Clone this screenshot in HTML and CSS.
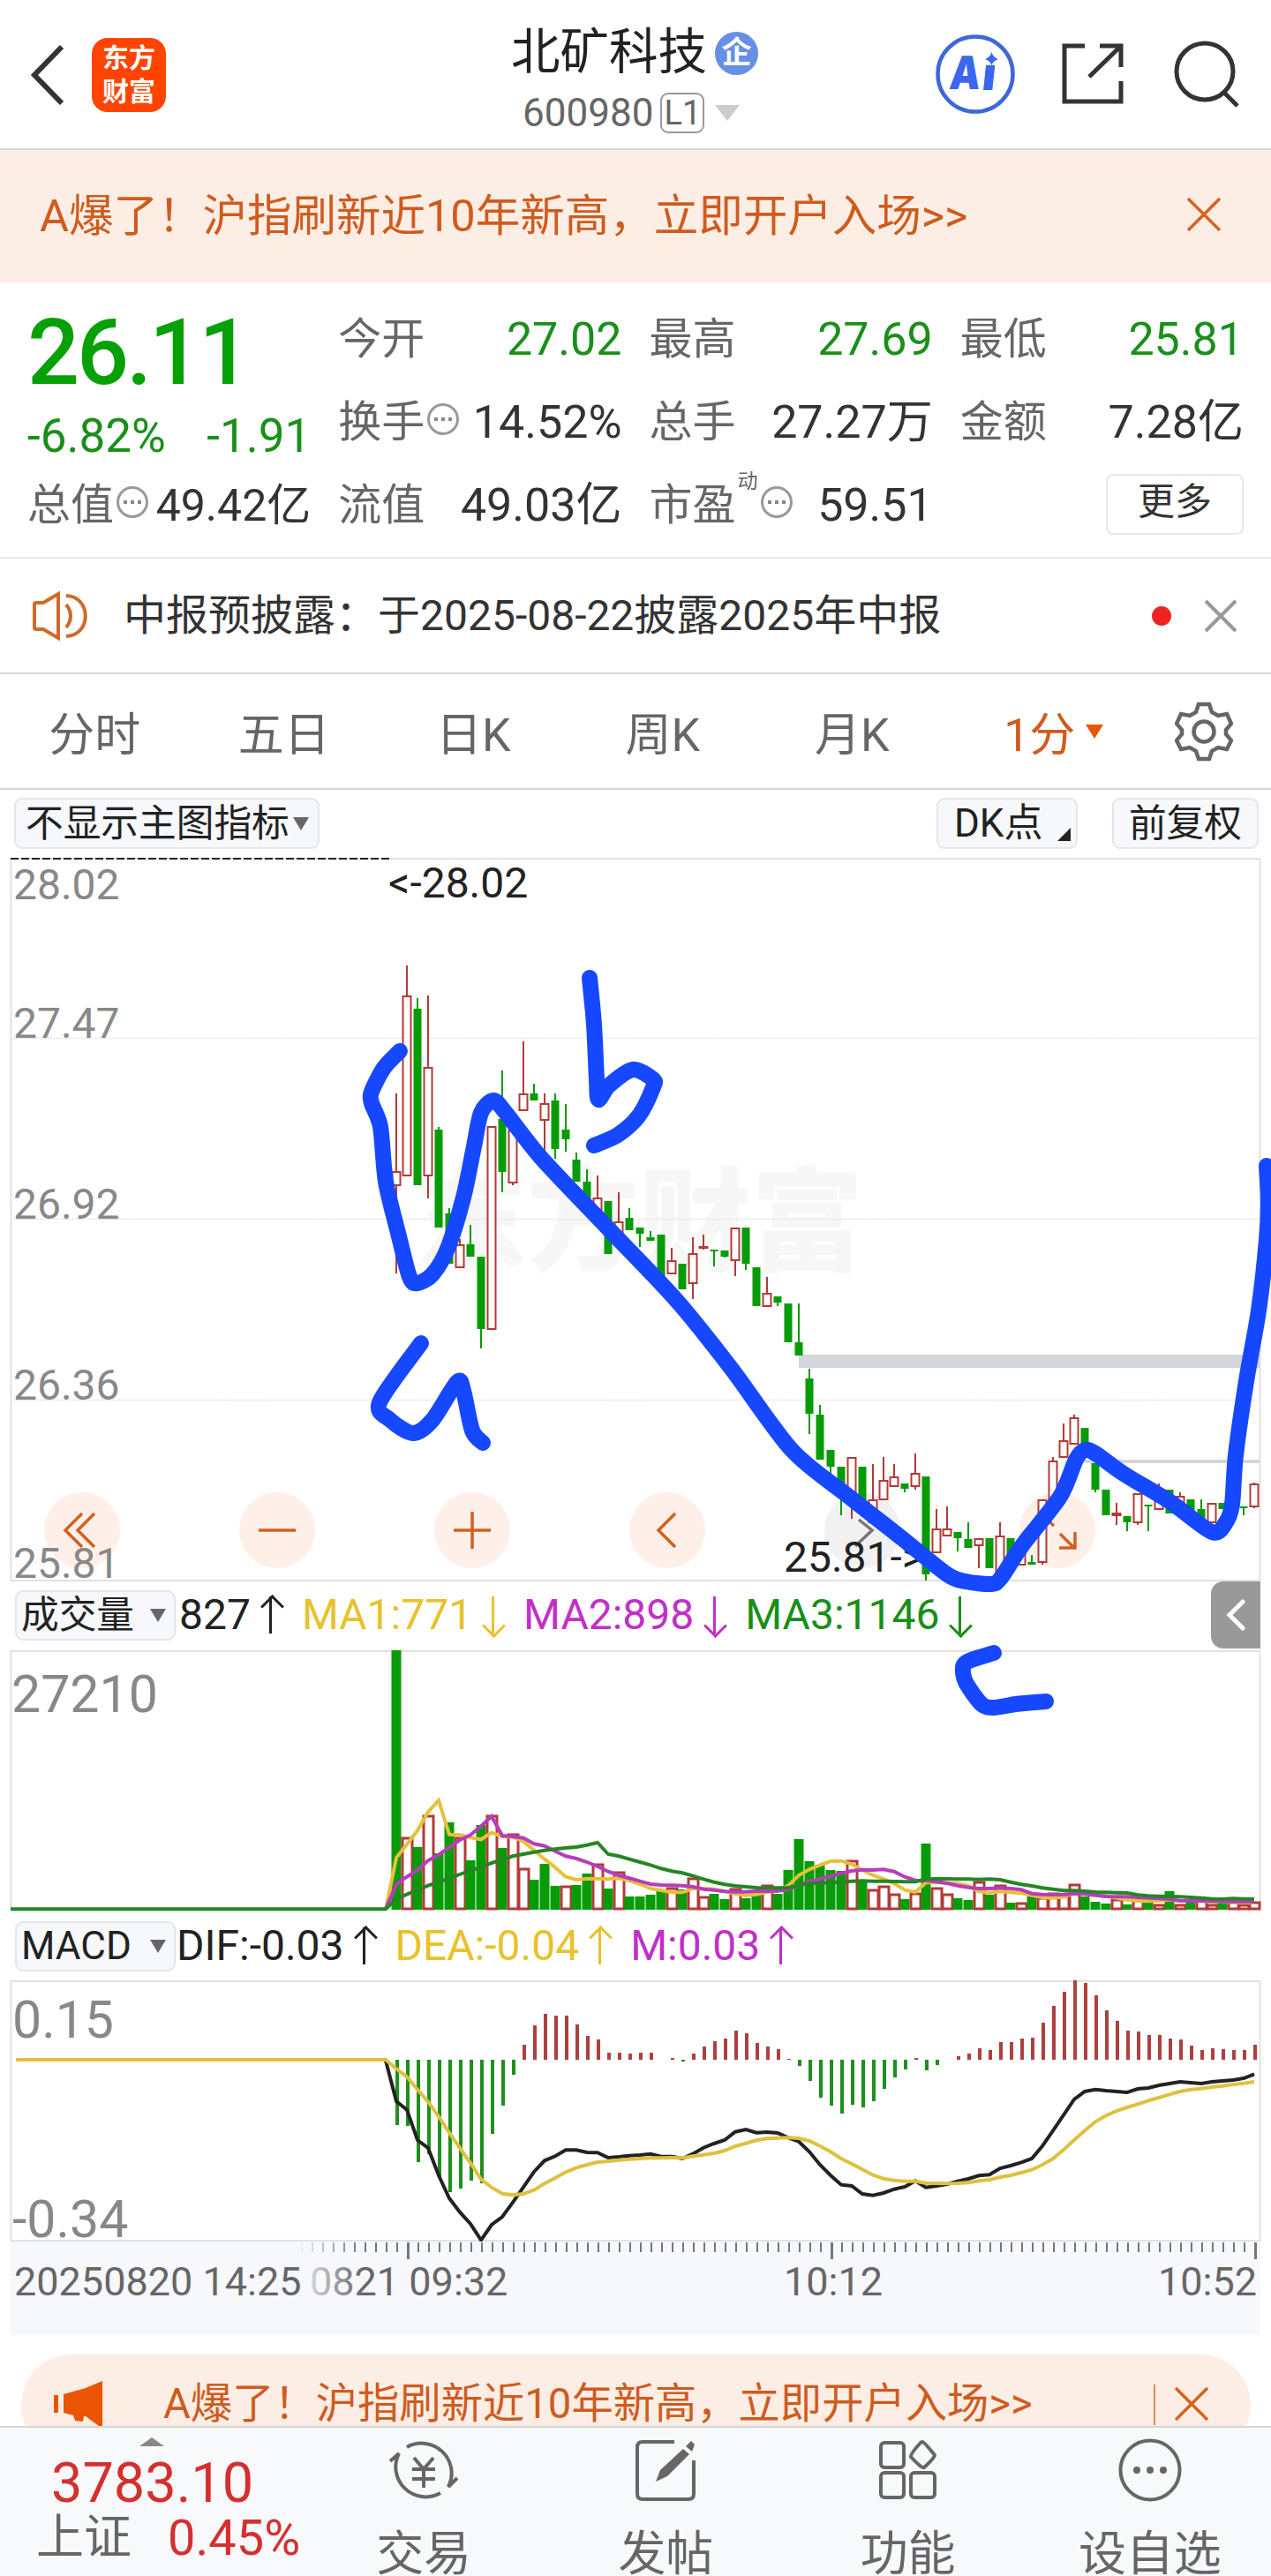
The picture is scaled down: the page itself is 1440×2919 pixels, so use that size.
FILE: index.html
```
<!DOCTYPE html>
<html lang="zh-CN">
<head>
    <meta charset="UTF-8">
    <meta name="viewport" content="width=device-width, initial-scale=1.0">
    <title>北矿科技 600980</title>
    <link rel="stylesheet" href="styles.css">
</head>
<body>
    <div class="page">
        <!-- 顶部导航 -->
        <header class="header">
            <div class="header-left">
                <svg class="icon-back" width="44" height="76" viewBox="0 0 44 76"><path d="M38 6L7 38L38 70"/></svg>
                <div class="logo"><span>东方</span><span>财富</span></div>
            </div>
            <div class="header-title">
                <div class="stock-name">北矿科技<span class="badge">企</span></div>
                <div class="stock-code">600980<span class="level">L1</span><i class="tri-down light"></i></div>
            </div>
            <div class="header-right">
                <svg width="90" height="90" viewBox="0 0 90 90">
                    <circle cx="45" cy="45" r="42.5" fill="none" stroke="#3f67d8" stroke-width="4.500"/>
                    <g class="ai-text" transform="skewX(-6) translate(6 0)">
                        <text x="15" y="62" textLength="35" lengthAdjust="spacingAndGlyphs">A</text>
                        <text x="52" y="63">ı</text>
                    </g>
                    <path d="M63.500 20Q65 26 71 28Q65 30 63.500 35Q62 30 56 28Q62 26 63.500 20Z" fill="#3a66f0"/>
                </svg>
                <svg class="line-icon" width="76" height="76" viewBox="0 0 76 76">
                    <path d="M29 6H6V69H70V46M46 6H70V30M69 7L34 41"/>
                </svg>
                <svg class="line-icon" width="80" height="80" viewBox="0 0 80 80">
                    <circle cx="39" cy="37" r="32"/><path d="M61 61L76 76"/>
                </svg>
            </div>
        </header>

        <!-- 开户广告 -->
        <div class="top-banner">
            <span>A爆了！沪指刷新近10年新高，立即开户入场&gt;&gt;</span>
            <svg width="40" height="40" viewBox="0 0 40 40"><path d="M2 2L38 38M38 2L2 38"/></svg>
        </div>

        <!-- 行情数据 -->
        <section class="quote">
            <div class="quote-col">
                <div class="price">26.11</div>
                <div class="change"><span>-6.82%</span><span>-1.91</span></div>
                <div class="cell total"><label>总值</label><i class="more-dot"></i><b>49.42亿</b></div>
            </div>
            <div class="quote-col">
                <div class="cell"><label>今开</label><b class="down">27.02</b></div>
                <div class="cell"><label>换手</label><i class="more-dot"></i><b>14.52%</b></div>
                <div class="cell"><label>流值</label><b>49.03亿</b></div>
            </div>
            <div class="quote-col">
                <div class="cell"><label>最高</label><b class="down">27.69</b></div>
                <div class="cell"><label>总手</label><b>27.27万</b></div>
                <div class="cell"><label>市盈<sup>动</sup></label><i class="more-dot pe"></i><b>59.51</b></div>
            </div>
            <div class="quote-col">
                <div class="cell"><label>最低</label><b class="down">25.81</b></div>
                <div class="cell"><label>金额</label><b>7.28亿</b></div>
                <div class="cell"><button class="more-button">更多</button></div>
            </div>
        </section>

        <!-- 公告 -->
        <div class="notice">
            <svg class="icon-speaker" width="66" height="56" viewBox="0 0 66 56">
                <path d="M3 15Q3 13 5 13H13L30 3V53L13 43H5Q3 43 3 41ZM39 15Q49 28 39 41M39 5C68 6 68 50 39 51"/>
            </svg>
            <span class="notice-text">中报预披露：于2025-08-22披露2025年中报</span>
            <i class="red-dot"></i>
            <svg class="icon-close" width="38" height="38" viewBox="0 0 38 38"><path d="M2 2L36 36M36 2L2 36"/></svg>
        </div>

        <!-- 周期切换 -->
        <nav class="tabs">
            <span>分时</span>
            <span>五日</span>
            <span>日K</span>
            <span>周K</span>
            <span>月K</span>
            <span class="active">1分<i class="tri-down orange"></i></span>
            <div class="gear">
                <svg width="66" height="68" viewBox="0 0 66 68">
                    <path d="M27 3H39L42 12L49 16L59 14L64 25L58 32V37L64 44L59 54L49 52L42 56L39 65H27L24 56L17 52L7 54L2 44L8 37V32L2 25L7 14L17 16L24 12Z"/>
                    <circle cx="33" cy="34" r="11.500"/>
                </svg>
            </div>
        </nav>

        <div class="toolbar">
            <div class="pill">不显示主图指标<i class="tri-down"></i></div>
            <div class="toolbar-right">
                <div class="pill dk">DK点<i class="corner"></i></div>
                <div class="pill">前复权</div>
            </div>
        </div>

        <!-- K线图 -->
        <svg class="chart" id="kline" width="1440" height="819" viewBox="0 972 1440 819">
            <text class="watermark" x="470" y="1430">东方财富</text>
            <path class="grid" d="M12 1176.500H1427M12 1381.500H1427M12 1586.500H1427"/>
            <rect class="frame" x="12.500" y="973" width="1415" height="818"/>
            <path d="M12 973H442" stroke="#222" stroke-width="2" stroke-dasharray="9 3"/>
            <g class="tools">
                <circle cx="93" cy="1734" r="43"/>
                <circle cx="314" cy="1734" r="43"/>
                <circle cx="535" cy="1734" r="43"/>
                <circle cx="756" cy="1734" r="43"/>
                <circle cx="977" cy="1734" r="43" class="off"/>
                <circle cx="1198" cy="1734" r="43"/>
                <path d="M93 1715L74 1734L93 1753M107 1715L88 1734L107 1753M293 1734H335M514 1734H556M535 1713V1755M765 1715L746 1734L765 1753"/>
                <path d="M1180 1716L1194 1729M1201 1738L1217 1754M1200 1754H1218V1736"/>
                <path d="M973 1722L988 1734L969 1752" class="off-line"/>
            </g>
            <rect x="905" y="1535" width="522" height="15" fill="#d3d7dc"/>
            <rect x="1229" y="1654" width="198" height="4" fill="#d3d7dc"/>
            <g class="axis-label">
                <text x="15" y="1019">28.02</text>
                <text x="15" y="1176">27.47</text>
                <text x="15" y="1381">26.92</text>
                <text x="15" y="1586">26.36</text>
                <text x="15" y="1788">25.81</text>
            </g>
            <g id="candles"></g>
            <text class="mark" x="440" y="1017">&lt;-28.02</text>
            <text class="mark" x="888" y="1781">25.81-&gt;</text>
        </svg>

        <!-- 成交量 -->
        <div class="indicator">
            <div class="pill small">成交量<i class="tri-down"></i></div>
            <span class="v black">827<i class="up"></i></span>
            <span class="v yellow">MA1:771<i class="down-arrow"></i></span>
            <span class="v purple">MA2:898<i class="down-arrow"></i></span>
            <span class="v green">MA3:1146<i class="down-arrow"></i></span>
            <div class="collapse">
                <svg width="22" height="36" viewBox="0 0 22 36"><path d="M19 3L4 18L19 33"/></svg>
            </div>
        </div>
        <svg class="chart" width="1440" height="294" viewBox="0 0 1440 294">
            <path class="frame" d="M12.500 294V1H1427.500V294"/>
            <text class="axis-big" x="13" y="70">27210</text>
            <g id="volume"></g>
        </svg>

        <!-- MACD -->
        <div class="indicator macd">
            <div class="pill small">MACD<i class="tri-down"></i></div>
            <span class="v black">DIF:-0.03<i class="up"></i></span>
            <span class="v yellow">DEA:-0.04<i class="up"></i></span>
            <span class="v purple">M:0.03<i class="up"></i></span>
        </div>
        <svg class="chart" width="1440" height="296" viewBox="0 0 1440 296">
            <rect class="frame" x="12.500" y="1" width="1415" height="294"/>
            <text class="axis-big" x="14" y="65">0.15</text>
            <text class="axis-big" x="14" y="291">-0.34</text>
            <g id="macd"></g>
        </svg>

        <!-- 时间轴 -->
        <div class="time-axis">
            <svg width="1440" height="106" viewBox="0 0 1440 106">
                <defs>
                    <linearGradient id="fade" gradientUnits="userSpaceOnUse" x1="340" y1="0" x2="412" y2="0">
                        <stop offset="0" stop-color="#666" stop-opacity="0.1"/>
                        <stop offset="1" stop-color="#666"/>
                    </linearGradient>
                </defs>
                <rect x="12" y="0" width="1416" height="106" fill="#f7f8fb"/>
                <g id="ticks"></g>
                <text x="16" y="61">20250820 14:25</text>
                <text x="351" y="61" fill="url(#fade)">0821 09:32</text>
                <text x="944" y="61" text-anchor="middle">10:12</text>
                <text x="1424" y="61" text-anchor="end">10:52</text>
            </svg>
        </div>

        <!-- 底部广告 -->
        <div class="bottom-banner-wrap">
            <div class="bottom-banner">
                <svg class="horn" width="60" height="54" viewBox="0 0 60 54">
                    <path d="M2 16H7V36H2ZM13 15L38 8L57 0V54L38 40H36L35 46L26 45L24 39L13 36Z"/>
                </svg>
                <span>A爆了！沪指刷新近10年新高，立即开户入场&gt;&gt;</span>
                <i class="divider"></i>
                <svg class="x" width="40" height="40" viewBox="0 0 40 40"><path d="M2 2L38 38M38 2L2 38"/></svg>
            </div>
        </div>

        <!-- 底部菜单 -->
        <footer class="footer">
            <div class="index">
                <i class="tri-up"></i>
                <div class="index-value">3783.10</div>
                <div class="index-row"><span>上证</span><b>0.45%</b></div>
            </div>
            <div class="menu">
                <svg width="84" height="76" viewBox="0 0 84 76">
                    <path d="M23 12A34 34 0 0 1 70 57L80 47M61 64A34 34 0 0 1 14 19L4 28"/>
                    <path d="M31 24L42 37L53 24M42 37V58M29 37H55M29 48H55"/>
                </svg>
                <span>交易</span>
            </div>
            <div class="menu">
                <svg width="76" height="76" viewBox="0 0 76 76">
                    <path d="M48 6H12Q6 6 6 12V65Q6 71 12 71H64Q70 71 70 65V27"/>
                    <path d="M58 14L65 20L40 45L27 51L32 38Z M61 11L67 5L71 9L68 17Z" class="solid"/>
                </svg>
                <span>发帖</span>
            </div>
            <div class="menu">
                <svg width="76" height="76" viewBox="0 0 76 76">
                    <rect x="7" y="7" width="26" height="28" rx="4"/>
                    <rect x="7" y="41" width="26" height="28" rx="4"/>
                    <rect x="41" y="41" width="27" height="28" rx="4"/>
                    <path d="M54 6Q56 6 68 21Q69 23 56 35Q54 37 41 23Q39 21 52 7Z"/>
                </svg>
                <span>功能</span>
            </div>
            <div class="menu">
                <svg width="76" height="76" viewBox="0 0 76 76">
                    <circle cx="38" cy="38" r="33.500"/>
                    <g class="dots"><circle cx="23" cy="38" r="4"/><circle cx="38" cy="38" r="4"/><circle cx="53" cy="38" r="4"/></g>
                </svg>
                <span>设自选</span>
            </div>
        </footer>

        <!-- 手绘标注 -->
        <svg class="drawing" width="1440" height="2919" viewBox="0 0 1440 2919">
            <path id="wave"/>
            <path id="letterA"/>
            <path id="letterB"/>
            <path id="letterC"/>
        </svg>
    </div>

    <script src="chart.js"></script>
</body>
</html>
```

FILE: styles.css
```
* {
    margin: 0;
    padding: 0;
    box-sizing: border-box;
}

body {
    width: 1440px;
    background: #fff;
    color: #333;
    font-family: Roboto, 'Noto Sans CJK SC', sans-serif;
}

i, b, label {
    font-style: normal;
    font-weight: 400;
}

svg {
    display: block;
    flex: none;
}

.page {
    position: relative;
    width: 1440px;
    height: 2919px;
    overflow: hidden;
}

/* 小三角 */
.tri-down {
    display: inline-block;
    border: 9px solid transparent;
    border-top: 15px solid #666;
    border-bottom: 0;
}

.tri-down.light {
    border-width: 18px 14px 0;
    border-top-color: #ccc;
    margin-left: 12px;
}

.tri-down.orange {
    border-width: 16px 10px 0;
    border-top-color: #ea5504;
    margin-left: 12px;
}

/* 顶部 */
.header {
    height: 170px;
    border-bottom: 2px solid #d8d8d8;
    display: flex;
    justify-content: space-between;
    padding: 0 34px 0 32px;
}

.header-left {
    width: 400px;
    display: flex;
    align-items: center;
    gap: 28px;
    padding-top: 2px;
}

.icon-back path {
    fill: none;
    stroke: #333;
    stroke-width: 6;
}

.logo {
    width: 84px;
    height: 84px;
    border-radius: 18px;
    background: #ff4400;
    color: #fff;
    font-size: 30px;
    font-weight: 700;
    line-height: 38px;
    text-align: center;
    padding-top: 4px;
}

.logo span {
    display: block;
}

.header-title {
    padding-top: 28px;
}

.stock-name {
    display: flex;
    align-items: center;
    font-size: 55.500px;
    line-height: 64px;
    color: #222;
}

.badge {
    width: 49px;
    height: 49px;
    margin-left: 9px;
    border-radius: 50%;
    background: #6690e4;
    color: #fff;
    font-size: 34px;
    font-weight: 700;
    line-height: 47px;
    text-align: center;
}

.stock-code {
    display: flex;
    align-items: center;
    margin-top: 12px;
    padding-left: 13px;
    font-size: 44px;
    line-height: 48px;
    color: #666;
}

.level {
    width: 50px;
    height: 46px;
    margin-left: 8px;
    border: 2px solid #999;
    border-radius: 9px;
    font-size: 38px;
    line-height: 43px;
    text-align: center;
}

.header-right {
    width: 400px;
    display: flex;
    align-items: center;
    justify-content: flex-end;
    gap: 50px;
}

.ai-text {
    font-family: Inter, sans-serif;
    font-size: 52px;
    font-weight: 900;
    fill: #3a66f0;
}

.line-icon {
    fill: none;
    stroke: #333;
    stroke-width: 5;
}

/* 广告条 */
.top-banner {
    height: 150px;
    padding: 0 56px 1px 45px;
    background: #fceee5;
    color: #cf5b1e;
    display: flex;
    align-items: center;
    justify-content: space-between;
    font-size: 50.500px;
    line-height: 60px;
}

.top-banner svg {
    margin-bottom: 3px;
}

.top-banner path, .bottom-banner .x path {
    stroke: #d8601f;
    stroke-width: 3.500;
}

/* 行情 */
.quote {
    height: 313px;
    padding: 18px 31px 0 31px;
    border-bottom: 2px solid #ececec;
    display: flex;
    gap: 31px;
}

.quote-col {
    flex: 1;
}

.cell {
    height: 94px;
    display: flex;
    align-items: center;
    font-size: 52px;
    line-height: 60px;
    white-space: nowrap;
}

.cell label {
    position: relative;
    font-size: 49px;
    color: #666;
}

.cell b {
    margin-left: auto;
    color: #333;
}

.cell b.down {
    color: #1a8f1a;
}

.cell sup {
    position: absolute;
    left: 100px;
    top: -12px;
    font-size: 23px;
    line-height: 30px;
}

.more-dot {
    width: 36px;
    height: 36px;
    margin: -8px 0 0 3px;
    border: 3px solid #999;
    border-radius: 50%;
    background: radial-gradient(circle 2.500px at 7px 15px, #888 90%, transparent),
        radial-gradient(circle 2.500px at 15px 15px, #888 90%, transparent),
        radial-gradient(circle 2.500px at 23px 15px, #888 90%, transparent);
}

.more-dot.pe {
    margin-left: 28px;
}

.price {
    height: 124px;
    font-size: 104px;
    line-height: 124px;
    font-weight: 500;
    letter-spacing: -3px;
    color: #07a007;
}

.change {
    height: 64px;
    display: flex;
    justify-content: space-between;
    font-size: 53px;
    line-height: 64px;
    color: #1a8f1a;
}

.total b {
    font-size: 50px;
}

.more-button {
    width: 156px;
    height: 69px;
    margin-left: auto;
    background: #fff;
    border: 2px solid #e8e8e8;
    border-radius: 8px;
    font-family: inherit;
    font-size: 42px;
    line-height: 50px;
    padding-bottom: 4px;
    margin-bottom: 4px;
    color: #333;
}

/* 公告 */
.notice {
    height: 131px;
    padding: 0 38px 0 36px;
    border-bottom: 2px solid #d8d8d8;
    display: flex;
    align-items: center;
}

.icon-speaker path {
    fill: none;
    stroke: #cf6a2a;
    stroke-width: 4;
}

.notice-text {
    margin-left: 38px;
    font-size: 48px;
    line-height: 56px;
}

.red-dot {
    width: 22px;
    height: 22px;
    margin-left: auto;
    border-radius: 50%;
    background: #ee2222;
}

.icon-close {
    margin-left: 37px;
}

.icon-close path {
    stroke: #999;
    stroke-width: 4;
}

/* 周期 */
.tabs {
    height: 131px;
    border-bottom: 2px solid #d8d8d8;
    display: flex;
    align-items: center;
    font-size: 52px;
    color: #666;
}

.tabs > span {
    width: 214.500px;
    display: flex;
    align-items: center;
    justify-content: center;
}

.tabs .active {
    padding-left: 28px;
    color: #cf5b1e;
}

.gear {
    flex: 1;
    display: flex;
    justify-content: center;
}

.gear svg {
    fill: none;
    stroke: #666;
    stroke-width: 4.500;
}

/* 工具栏 */
.toolbar {
    height: 77px;
    padding: 9px 14px 0 16px;
    display: flex;
    justify-content: space-between;
}

.toolbar-right {
    display: flex;
    gap: 39px;
}

.pill {
    height: 58px;
    padding: 0 10px 0 11px;
    background: #f7f8fb;
    border: 2px solid #e4e6ea;
    border-radius: 9px;
    display: flex;
    align-items: center;
    gap: 4px;
    font-size: 42.700px;
    line-height: 54px;
    color: #222;
    white-space: nowrap;
}

.toolbar-right .pill {
    padding: 0 17px;
}

.toolbar-right .dk {
    width: 160px;
    padding: 0 6px 0 18px;
    font-size: 44px;
}

.corner {
    align-self: flex-end;
    margin: 0 0 7px auto;
    border-left: 15px solid transparent;
    border-bottom: 15px solid #222;
}

.pill.small {
    width: 182px;
    height: 57px;
    padding: 0 9px 0 5px;
    justify-content: space-between;
}

/* 图表 */
.chart {
    overflow: visible;
}

.frame {
    fill: none;
    stroke: #e2e2e2;
    stroke-width: 2;
}

.grid {
    stroke: #e4e4e4;
    stroke-width: 1.500;
    stroke-dasharray: 2 1;
}

.watermark {
    font-size: 127px;
    font-weight: 900;
    fill: #f7f7f7;
}

.tools circle {
    fill: #fef0e8;
}

.tools circle.off {
    fill: #f1f1f1;
}

.tools path {
    fill: none;
    stroke: #d2601f;
    stroke-width: 3.500;
}

.tools path.off-line {
    stroke: #777;
}

.axis-label text {
    font-size: 48px;
    fill: #888;
}

.axis-big {
    font-size: 59px;
    fill: #888;
}

.mark {
    font-size: 48px;
    fill: #222;
}

.indicator {
    height: 79px;
    padding: 0 12px 1px 17px;
    display: flex;
    align-items: center;
    font-size: 48px;
    line-height: 56px;
}

.indicator .v {
    display: flex;
    align-items: center;
}

.indicator .v + .v {
    margin-left: 24px;
}

.pill + .v {
    margin-left: 4px;
}

.macd {
    height: 80px;
    padding: 2px 12px 0 17px;
}

.macd .pill {
    font-size: 44px;
}

.macd .pill + .v {
    margin-left: 1px;
}

.black { color: #222; }
.yellow { color: #e8c22a; }
.purple { color: #c22fc8; }
.green { color: #178f17; }

/* 涨跌箭头 */
.up, .down-arrow {
    position: relative;
    width: 22px;
    height: 42px;
    margin-left: 12px;
}

.up::before, .down-arrow::before {
    content: '';
    position: absolute;
    left: 9.500px;
    top: 0;
    width: 3px;
    height: 42px;
    background: currentColor;
}

.up::after, .down-arrow::after {
    content: '';
    position: absolute;
    left: 3px;
    width: 16px;
    height: 16px;
    border: 3px solid currentColor;
    border-width: 3px 0 0 3px;
    top: 2px;
    transform: rotate(45deg);
}

.down-arrow::after {
    top: 24px;
    transform: rotate(225deg);
}

.collapse {
    width: 56px;
    height: 76px;
    margin-left: auto;
    border-radius: 14px 0 0 14px;
    background: #999;
    display: flex;
    align-items: center;
    justify-content: center;
}

.collapse path {
    fill: none;
    stroke: #fff;
    stroke-width: 5;
    stroke-linecap: round;
}

.time-axis {
    height: 106px;
}

.time-axis text {
    font-size: 45px;
    fill: #666;
}

.time-axis text[fill] {
    fill: url(#fade);
}

/* 底部广告 */
.bottom-banner-wrap {
    height: 103px;
    padding: 22px 23px 0 24px;
    overflow: hidden;
}

.bottom-banner {
    height: 114px;
    padding: 0 47px 0 35px;
    border-radius: 57px;
    background: #fceee5;
    color: #cf5b1e;
    display: flex;
    align-items: center;
    font-size: 47.300px;
    line-height: 56px;
    white-space: nowrap;
}

.bottom-banner span {
    margin: -2px 0 0 66px;
}

.bottom-banner .x {
    margin: -2px 0 0 21px;
}

.horn path {
    fill: #ea5504;
}

.divider {
    width: 2px;
    height: 46px;
    margin-left: auto;
    background: #d98a5c;
}

/* 底部菜单 */
.footer {
    position: relative;
    height: 170px;
    background: #f8f9fb;
    border-top: 2px solid #d4d6d8;
    display: flex;
    color: #666;
}

.index {
    width: 343px;
    padding: 11px 0 0 41px;
}

.tri-up {
    display: block;
    width: 28px;
    margin-left: 117px;
    border: 14px solid transparent;
    border-bottom: 10px solid #888;
    border-top: 0;
}

.index-value {
    margin-left: 17px;
    padding-top: 6px;
    font-size: 63px;
    line-height: 72px;
    color: #d4302f;
}

.index-row {
    display: flex;
    align-items: center;
    gap: 41px;
    font-size: 54px;
    line-height: 52px;
}

.index-row b {
    font-size: 56px;
    color: #d4302f;
    white-space: nowrap;
}

.menu {
    flex: 1;
    display: flex;
    flex-direction: column;
    align-items: center;
    padding-top: 10px;
}

.menu svg {
    fill: none;
    stroke: #666;
    stroke-width: 4;
}

.menu .solid, .menu .dots {
    fill: #666;
    stroke: none;
}

.menu span {
    margin-top: 25px;
    font-size: 54px;
    line-height: 66px;
}

/* 手绘标注盖在整页上 */
.drawing {
    position: absolute;
    left: 0;
    top: 0;
    fill: none;
    stroke: #1648ff;
    stroke-width: 18;
    stroke-linecap: round;
    stroke-linejoin: round;
    pointer-events: none;
}
```

FILE: chart.js
```
const RED = '#b23a38';
const GREEN = '#079c07';
const X0 = 449;
const STEP = 12;

// [颜色, 最高, 实体上, 实体下, 最低]
const candles = [
    ['r', 1239, 1327, 1343, 1443], ['r', 1094, 1128, 1332, 1332], ['g', 1131, 1143, 1343, 1343],
    ['r', 1128, 1209, 1332, 1358], ['g', 1277, 1280, 1391, 1391], ['g', 1369, 1375, 1432, 1432],
    ['r', 1404, 1410, 1436, 1436], ['g', 1388, 1410, 1424, 1424], ['g', 1424, 1424, 1506, 1528],
    ['r', 1276, 1276, 1506, 1506], ['g', 1213, 1268, 1328, 1351], ['r', 1280, 1280, 1340, 1343],
    ['r', 1180, 1239, 1258, 1258], ['g', 1228, 1239, 1247, 1247], ['r', 1239, 1250, 1269, 1308],
    ['g', 1239, 1247, 1302, 1313], ['g', 1251, 1280, 1291, 1305], ['g', 1306, 1314, 1339, 1339],
    ['g', 1325, 1339, 1368, 1368], ['r', 1332, 1357, 1373, 1373], ['g', 1361, 1361, 1421, 1421],
    ['r', 1351, 1384, 1408, 1408], ['g', 1369, 1380, 1394, 1394], ['g', 1391, 1391, 1398, 1413],
    ['g', 1395, 1402, 1406, 1406], ['g', 1399, 1399, 1454, 1454], ['r', 1414, 1428, 1443, 1443],
    ['g', 1432, 1432, 1461, 1461], ['r', 1402, 1420, 1454, 1472], ['r', 1399, 1412, 1414, 1416],
    ['g', 1416, 1416, 1418, 1435], ['g', 1417, 1417, 1424, 1425], ['r', 1391, 1391, 1428, 1446],
    ['g', 1391, 1391, 1432, 1439], ['g', 1436, 1436, 1480, 1480], ['r', 1447, 1465, 1480, 1480],
    ['g', 1469, 1469, 1476, 1480], ['g', 1477, 1477, 1521, 1521], ['g', 1477, 1521, 1536, 1536],
    ['g', 1551, 1562, 1602, 1625], ['g', 1592, 1603, 1654, 1654], ['g', 1643, 1643, 1662, 1670],
    ['g', 1662, 1662, 1687, 1717], ['r', 1651, 1651, 1702, 1721], ['g', 1662, 1662, 1706, 1706],
    ['r', 1659, 1699, 1725, 1725], ['r', 1651, 1677, 1699, 1699], ['r', 1659, 1673, 1684, 1684],
    ['g', 1681, 1681, 1687, 1691], ['r', 1647, 1669, 1684, 1688], ['g', 1673, 1673, 1784, 1791],
    ['r', 1710, 1732, 1759, 1759], ['r', 1707, 1732, 1740, 1740], ['g', 1736, 1736, 1743, 1758],
    ['g', 1725, 1744, 1754, 1754], ['r', 1743, 1743, 1751, 1777], ['g', 1743, 1743, 1777, 1777],
    ['r', 1725, 1740, 1784, 1784], ['g', 1743, 1743, 1763, 1763], ['r', 1760, 1760, 1773, 1773],
    ['g', 1762, 1770, 1773, 1773], ['r', 1699, 1699, 1770, 1773], ['r', 1651, 1655, 1704, 1704],
    ['r', 1613, 1632, 1651, 1651], ['r', 1603, 1606, 1636, 1636], ['g', 1618, 1618, 1637, 1637],
    ['g', 1658, 1658, 1688, 1691], ['g', 1688, 1688, 1717, 1717], ['r', 1703, 1714, 1717, 1728],
    ['g', 1718, 1718, 1725, 1735], ['r', 1692, 1692, 1725, 1728], ['g', 1705, 1705, 1707, 1735],
    ['r', 1681, 1700, 1710, 1710], ['g', 1688, 1688, 1715, 1715], ['r', 1691, 1695, 1703, 1703],
    ['g', 1699, 1699, 1715, 1715], ['g', 1699, 1710, 1721, 1721], ['r', 1703, 1703, 1725, 1725],
    ['g', 1703, 1703, 1710, 1710], ['g', 1709, 1709, 1711, 1711], ['g', 1707, 1707, 1709, 1717],
    ['r', 1680, 1681, 1707, 1709]
];

// 成交量柱高
const volumes = [
    294, 82, 71, 107, 64, 99, 82, 56, 96, 107, 70, 86, 47, 34, 52, 27, 27, 28, 41, 52, 24, 43, 15, 15,
    17, 21, 25, 23, 36, 15, 18, 12, 24, 13, 17, 28, 18, 45, 80, 55, 51, 45, 44, 56, 34, 23, 27, 18, 12,
    19, 75, 25, 18, 13, 11, 32, 17, 28, 8, 8, 15, 14, 19, 16, 29, 15, 9, 7, 12, 6, 11, 8, 6, 21, 6, 9,
    11, 6, 7, 10, 6, 9
];
const volumeColors = 'grgrggrggrgrrggg' + 'rggrgrggggrgrrgg' + 'rggrggggggg' + 'rgrrrgrgrrggrgrgrgrrrrgggrgrgrgrgrrgrrr';

// 均线，从开盘前一根开始，单位 1/3 像素
const ma1 = [1090, 915, 870, 823, 760, 720, 836, 838, 847, 853, 830, 843, 845, 860, 890, 920, 948, 980, 990, 987,
    987, 988, 985, 993, 1005, 1020, 1026, 1033, 1033, 1020, 1020, 1022, 1030, 1038, 1043, 1040, 1032, 1028, 1010,
    975, 955, 940, 927, 926, 937, 958, 975, 987, 1003, 1025, 1032, 1000, 1000, 1001, 1003, 1010, 1030, 1034, 1030,
    1033, 1036, 1043, 1050, 1052, 1048, 1036, 1037, 1040, 1045, 1052, 1058, 1062, 1063, 1062, 1058, 1062, 1062,
    1063, 1065, 1065, 1067, 1068, 1068];
const ma2 = [1090, 1005, 980, 958, 925, 905, 880, 855, 838, 808, 775, 840, 843, 848, 868, 875, 893, 910, 918, 930,
    945, 962, 975, 985, 995, 1005, 1008, 1009, 1010, 1014, 1022, 1025, 1030, 1031, 1031, 1029, 1029, 1028, 1024,
    1008, 996, 987, 978, 968, 960, 956, 957, 955, 962, 980, 992, 993, 997, 1002, 1010, 1016, 1020, 1020, 1018,
    1020, 1024, 1037, 1040, 1041, 1040, 1037, 1039, 1043, 1047, 1048, 1048, 1050, 1052, 1054, 1057, 1061, 1062,
    1062, 1063, 1064, 1065, 1065, 1066];
const ma3 = [1090, 1055, 1040, 1025, 1010, 998, 985, 972, 958, 948, 933, 922, 910, 903, 896, 890, 886, 882, 879,
    872, 864, 903, 910, 920, 930, 940, 952, 961, 967, 977, 988, 998, 1006, 1011, 1014, 1017, 1018, 1018, 1018,
    1008, 1003, 1001, 1000, 998, 995, 994, 995, 995, 996, 997, 997, 988, 987, 987, 988, 988, 989, 988, 990, 998,
    1006, 1011, 1018, 1022, 1027, 1027, 1029, 1032, 1033, 1034, 1035, 1042, 1045, 1046, 1047, 1048, 1050, 1052,
    1055, 1056, 1054, 1055, 1056];

const macdBars = [
    -74, -75, -116, -107, -133, -150, -146, -137, -140, -84, -52, -17, 17, 39, 52, 50, 50, 40, 27, 23, 8, 8, 7, 8,
    8, 0, 2, -2, 7, 15, 21, 24, 33, 30, 19, 15, 12, 1, -7, -24, -43, -52, -61, -51, -54, -47, -33, -20, -11, 2,
    -12, -6, 0, 4, 7, 13, 11, 20, 20, 24, 25, 42, 61, 77, 90, 87, 73, 56, 44, 33, 32, 28, 28, 24, 23, 16, 11, 13,
    12, 11, 11, 17
];
const dif = [315, 453, 482, 585, 612, 705, 783, 830, 870, 925, 873, 846, 797, 745, 693, 655, 640, 619, 619, 627,
    628, 645, 642, 638, 636, 632, 641, 641, 648, 632, 611, 597, 585, 557, 549, 560, 558, 561, 577, 590, 625, 669,
    705, 737, 741, 768, 773, 765, 752, 744, 724, 746, 741, 735, 725, 717, 706, 703, 681, 672, 661, 648, 605, 553,
    500, 447, 420, 413, 417, 420, 423, 411, 408, 399, 393, 387, 390, 393, 387, 384, 381, 375, 361];
const dea = [312, 343, 370, 413, 455, 505, 560, 612, 663, 718, 746, 767, 772, 768, 755, 733, 714, 694, 679, 669,
    660, 657, 653, 650, 648, 646, 646, 645, 646, 640, 635, 630, 621, 606, 596, 586, 580, 578, 577, 579, 588, 605,
    625, 648, 666, 685, 704, 716, 722, 725, 725, 731, 732, 733, 732, 730, 724, 720, 711, 705, 696, 686, 669, 648,
    618, 585, 553, 523, 502, 486, 474, 463, 451, 441, 430, 420, 413, 410, 405, 401, 396, 392, 387];

function rect(x, y, w, h, fill, stroke) {
    return `<rect x="${x}" y="${y}" width="${w}" height="${h}" fill="${fill}"` +
        (stroke ? ` stroke="${stroke}" stroke-width="2"` : '') + '/>';
}

function line(values, offset, color, startX) {
    const points = values.map((v, i) => `${X0 - STEP + i * STEP},${(v / 3 - offset).toFixed(1)}`);
    if (startX) {
        points.unshift(`${startX},${(values[0] / 3 - offset).toFixed(1)}`);
    }
    return `<polyline points="${points.join(' ')}" fill="none" stroke="${color}" stroke-width="4"/>`;
}

function drawCandles() {
    let html = '';
    candles.forEach(([c, high, top, bottom, low], i) => {
        const x = X0 + i * STEP;
        if (c === 'g') {
            html += rect(x - 1, high, 2, low - high, GREEN);
            html += rect(x - 4.5, top, 9, bottom - top, GREEN);
        } else {
            html += rect(x - 1, high, 2, top - high, RED);
            html += rect(x - 1, bottom, 2, low - bottom, RED);
            html += rect(x - 4.5, top + 1, 9, Math.max(bottom - top - 1, 1), '#fff', RED);
        }
    });
    document.getElementById('candles').innerHTML = html;
}

function drawVolume() {
    let html = rect(12, 292, 425, 2, '#3f7a3f');
    volumes.forEach((h, i) => {
        const x = X0 + i * STEP;
        html += volumeColors[i] === 'g'
            ? rect(x - 5.5, 294 - h, 11, h, GREEN)
            : rect(x - 5, 295 - h, 11, h - 2, '#fff', RED).replace('width="2"/>', 'width="3"/>');
    });
    html += line(ma1, 70, '#e8c03a');
    html += line(ma2, 70, '#b83cbc');
    html += line(ma3, 70, '#258525', 12);
    document.getElementById('volume').innerHTML = html;
}

function drawMacd() {
    let html = '';
    macdBars.forEach((h, i) => {
        const x = X0 + i * STEP - 1;
        html += h > 0 ? rect(x, 90 - h, 4, h, '#ae403e') : rect(x, 90, 4, -h, '#1f8f1f');
    });
    html += line(dif, 14, '#222');
    html += line(dea, 14, '#dfc040', 18);
    document.getElementById('macd').innerHTML = html;
}

function drawTicks() {
    let html = '';
    for (let i = -9; i <= 81; i++) {
        const major = i === 1 || i === 41 || i === 81;
        const opacity = Math.min(1, (i + 9.5) / 6);
        html += `<rect x="${X0 + i * STEP}" y="1" width="${major ? 3 : 2}" height="${major ? 19 : 11}" fill="#777" opacity="${opacity.toFixed(2)}"/>`;
    }
    document.getElementById('ticks').innerHTML = html;
}

// 过点画平滑曲线
function smooth(id, pts) {
    let d = `M${pts[0]}`;
    for (let i = 0; i < pts.length - 1; i++) {
        const p0 = pts[i - 1] || pts[i];
        const p1 = pts[i];
        const p2 = pts[i + 1];
        const p3 = pts[i + 2] || p2;
        d += `C${p1[0] + (p2[0] - p0[0]) / 7} ${p1[1] + (p2[1] - p0[1]) / 7} ` +
            `${p2[0] - (p3[0] - p1[0]) / 7} ${p2[1] - (p3[1] - p1[1]) / 7} ${p2[0]} ${p2[1]}`;
    }
    document.getElementById(id).setAttribute('d', d);
}

drawCandles();
drawVolume();
drawMacd();
drawTicks();

smooth('wave', [[453, 1191], [435, 1210], [421, 1237], [421, 1250], [431, 1277], [437, 1339], [451, 1397], [464, 1447],
    [473, 1454], [490, 1444], [507, 1415], [525, 1357], [537, 1299], [545, 1261], [559, 1247], [573, 1261],
    [614, 1313], [690, 1393], [766, 1473], [828, 1550], [897, 1643], [962, 1696], [1023, 1744], [1073, 1784],
    [1094, 1792], [1123, 1795], [1134, 1788], [1159, 1750], [1201, 1696], [1219, 1654], [1229, 1643], [1241, 1647],
    [1273, 1670], [1326, 1702], [1373, 1736], [1389, 1725], [1396, 1704], [1400, 1649], [1412, 1565], [1426, 1485],
    [1435, 1405], [1437, 1363], [1435, 1321]]);
smooth('letterA', [[477, 1522], [430, 1589], [442, 1609], [468, 1624], [490, 1609], [518, 1566], [525, 1576],
    [535, 1621], [547, 1635]]);
smooth('letterB', [[668, 1108], [673, 1161], [676, 1223], [678, 1246], [690, 1230], [717, 1212], [740, 1223],
    [740, 1232], [724, 1264], [700, 1286], [673, 1298]]);
smooth('letterC', [[1126, 1873], [1098, 1882], [1091, 1889], [1094, 1906], [1112, 1931], [1126, 1935], [1151, 1931],
    [1185, 1928]]);
```
